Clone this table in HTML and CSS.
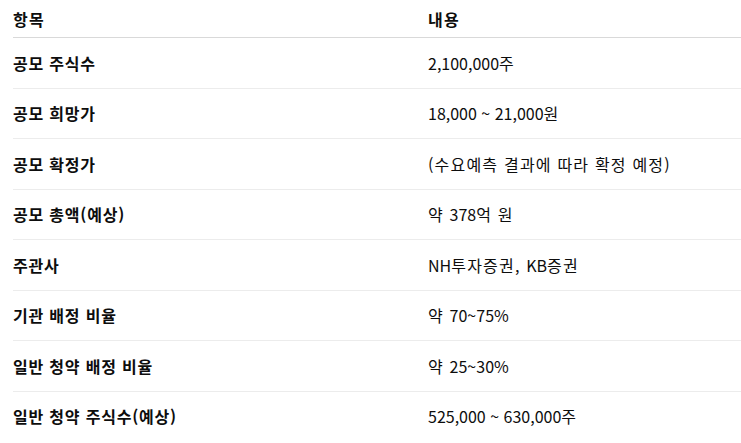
FILE: index.html
```html
<!DOCTYPE html>
<html lang="ko">
<head>
<meta charset="utf-8">
<link rel="stylesheet" href="styles.css">
</head>
<body>
<table class="info">
  <thead>
    <tr><th>항목</th><th>내용</th></tr>
  </thead>
  <tbody>
    <tr><td class="key">공모 주식수</td><td><span class="num">2,100,000</span>주</td></tr>
    <tr><td class="key">공모 희망가</td><td><span class="num">18,000 ~ 21,000</span>원</td></tr>
    <tr><td class="key">공모 확정가</td><td>(수요예측 결과에 따라 확정 예정)</td></tr>
    <tr><td class="key">공모 총액(예상)</td><td>약 <span class="num">378</span>억 원</td></tr>
    <tr><td class="key">주관사</td><td><span class="num">NH</span>투자증권, <span class="num">KB</span>증권</td></tr>
    <tr><td class="key">기관 배정 비율</td><td>약 <span class="num">70~75%</span></td></tr>
    <tr><td class="key">일반 청약 배정 비율</td><td>약 <span class="num">25~30%</span></td></tr>
    <tr><td class="key">일반 청약 주식수(예상)</td><td><span class="num">525,000 ~ 630,000</span>주</td></tr>
  </tbody>
</table>
</body>
</html>
```
FILE: styles.css
```css
html, body {
  margin: 0;
  padding: 0;
  background: #ffffff;
}
body {
  padding-left: 13px;
  font-family: "Noto Sans CJK KR", "Noto Sans", sans-serif;
  font-size: 16px;
  color: #0d0d0d;
}
.info {
  width: 728px;
  border-collapse: collapse;
  table-layout: fixed;
}
.info th, .info td {
  text-align: left;
  line-height: 24px;
  padding: 0;
  letter-spacing: 1.2px;
}
.info th:first-child, .info td:first-child {
  width: 415px;
}
.info th {
  font-weight: 700;
  padding-top: 6.5px;
  padding-bottom: 6.5px;
  border-bottom: 1px solid #d9d9d9;
}
.info td {
  padding-top: 12.75px;
  padding-bottom: 12.75px;
  border-bottom: 1px solid #ececec;
}
.info tbody tr:last-child td {
  border-bottom: none;
}
.info .key {
  font-weight: 700;
  letter-spacing: 0.8px;
}
.info .num {
  letter-spacing: 0;
}
```
